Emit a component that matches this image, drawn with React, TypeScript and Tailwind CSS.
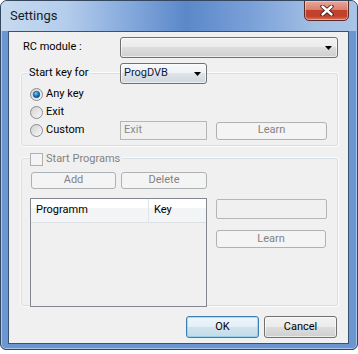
import React from "react";

const font = { fontFamily: 'Roboto, "Noto Sans", sans-serif' };

function Radio({ checked }: { checked?: boolean }) {
  return (
    <svg width="13" height="13" viewBox="0 0 13 13" className="shrink-0">
      <defs>
        <linearGradient id={checked ? "rg1" : "rg0"} x1="0" y1="0" x2="1" y2="1">
          <stop offset="0" stopColor="#d0d0d0" />
          <stop offset="1" stopColor="#fbfbfb" />
        </linearGradient>
        <radialGradient id="dot" cx="0.4" cy="0.35" r="0.7">
          <stop offset="0" stopColor="#8fd0f5" />
          <stop offset="0.5" stopColor="#1a7cc4" />
          <stop offset="1" stopColor="#0b4a82" />
        </radialGradient>
      </defs>
      <circle cx="6.5" cy="6.5" r="6" fill={`url(#${checked ? "rg1" : "rg0"})`} stroke="#8b8d8f" strokeWidth="1" />
      {checked && <circle cx="6.5" cy="6.5" r="3.3" fill="url(#dot)" stroke="#1f4f7a" strokeWidth="0.6" />}
    </svg>
  );
}

function Arrow() {
  return (
    <svg width="7" height="4" viewBox="0 0 7 4" className="shrink-0">
      <path d="M0 0 H7 L3.5 4 Z" fill="#000" />
    </svg>
  );
}

function DisabledButton({ label, className }: { label: string; className: string }) {
  return (
    <div
      className={`flex items-center justify-center rounded-[3px] border border-[#adb2b5] bg-[#f4f4f4] text-[11px] text-[#838383] ${className}`}
    >
      {label}
    </div>
  );
}

export default function App() {
  return (
    <div className="w-[358px] h-[354px] bg-white" style={font}>
      <div className="relative w-[358px] h-[350px] rounded-t-[7px] rounded-b-[6px] border border-[#34475e] bg-[#6a96d2] flex flex-col overflow-hidden shadow-[inset_0_0_0_1px_rgba(255,255,255,0.45)]">
        {/* title bar */}
        <div className="h-[30px] flex items-start justify-between bg-[linear-gradient(90deg,#c6daef_0%,#b5cdec_18%,#7fa5da_38%,#5b88c9_52%,#7aa0d8_70%,#a2bfe4_88%,#a9c4e6_100%)]">
          <span className="pl-[9px] pt-[7px] text-[13px] leading-[16px] text-[#141c28]">Settings</span>
          <div className="mr-[8px] mt-[-1px] w-[45px] h-[21px] rounded-b-[5px] border border-[#5a2a24] bg-[linear-gradient(180deg,#e9a99a_0%,#d98070_45%,#c4402c_50%,#c0412d_80%,#d8745c_100%)] flex items-center justify-center shadow-[inset_0_0_0_1px_rgba(255,220,210,0.5)]">
            <svg width="14" height="11" viewBox="0 0 14 11">
              <path d="M2.5 1.5 L11.5 9.5 M11.5 1.5 L2.5 9.5" stroke="#3a1a16" strokeWidth="4.2" strokeLinecap="round" />
              <path d="M2.5 1.5 L11.5 9.5 M11.5 1.5 L2.5 9.5" stroke="#ffffff" strokeWidth="2.4" strokeLinecap="round" />
            </svg>
          </div>
        </div>

        {/* client area */}
        <div className="ml-[7px] mr-[8px] mb-[5px] h-[313px] border border-[#3a5272] bg-[#f0f0f0] flex flex-col pl-[12px] pr-[10px] pt-[5px] text-[11px] text-black">
          {/* RC module row */}
          <div className="flex items-center h-[21px]">
            <div className="w-[99px] pl-[2px]">RC module :</div>
            <div className="w-[218px] h-[21px] rounded-[3px] border border-[#707070] bg-[linear-gradient(180deg,#f2f2f2_0%,#ebebeb_50%,#dddddd_50%,#cfcfcf_100%)] flex items-center justify-end pr-[5px] shadow-[inset_0_0_0_1px_rgba(255,255,255,0.6)]">
              <Arrow />
            </div>
          </div>

          {/* Group 1 */}
          <div className="mt-[15px] h-[73px] rounded-[3px] border border-[#d5dfe5] flex flex-col shadow-[0_0_0_1px_rgba(255,255,255,0.7)]">
            <div className="mt-[-11px] flex items-center h-[21px]">
              <div className="w-[98px]">
                <span className="ml-[5px] px-[2px] bg-[#f0f0f0]">Start key for</span>
              </div>
              <div className="w-[87px] h-[21px] rounded-[3px] border border-[#707070] bg-[linear-gradient(180deg,#f7f9fa_0%,#eef2f4_50%,#dde4e9_50%,#cfd8de_100%)] flex items-center justify-between pl-[3px] pr-[5px] text-[#101840] shadow-[inset_0_0_0_1px_rgba(255,255,255,0.6)]">
                <span>ProgDVB</span>
                <Arrow />
              </div>
            </div>
            <div className="mt-[1px] h-[18px] flex items-center pl-[8px] gap-[3px]">
              <Radio checked />
              <span>Any key</span>
            </div>
            <div className="h-[18px] flex items-center pl-[8px] gap-[3px]">
              <Radio />
              <span>Exit</span>
            </div>
            <div className="h-[19px] flex items-center">
              <div className="w-[98px] flex items-center pl-[8px] gap-[3px]">
                <Radio />
                <span>Custom</span>
              </div>
              <div className="w-[87px] h-[19px] border border-[#b3b7ba] bg-[#f0f0f0] flex items-center pl-[3px] text-[#8a8a8a]">
                Exit
              </div>
              <DisabledButton label="Learn" className="ml-[9px] w-[111px] h-[18px]" />
            </div>
          </div>

          {/* Group 2 */}
          <div className="mt-[12px] h-[148px] rounded-[3px] border border-[#d5dfe5] flex flex-col shadow-[0_0_0_1px_rgba(255,255,255,0.7)]">
            <div className="mt-[-8px] h-[16px] flex items-center pl-[8px]">
              <div className="flex items-center gap-[3px] bg-[#f0f0f0] pr-[2px]">
                <div className="w-[13px] h-[13px] border border-[#b1b1b1] bg-[#f4f4f4]" />
                <span className="text-[#838383]">Start Programs</span>
              </div>
            </div>
            <div className="mt-[5px] flex items-center pl-[9px] gap-[5px]">
              <DisabledButton label="Add" className="w-[85px] h-[17px]" />
              <DisabledButton label="Delete" className="w-[86px] h-[17px]" />
            </div>
            <div className="mt-[9px] flex items-start pl-[8px] mb-[-2px]">
              <div className="w-[177px] h-[109px] border border-[#828790] bg-[#f0f0f0] flex flex-col">
                <div className="h-[24px] flex bg-[linear-gradient(180deg,#ffffff_0%,#ffffff_40%,#f3f4f6_41%,#f4f5f7_100%)] border-b border-[#dde0e4]">
                  <div className="w-[118px] border-r border-[#e1e5ea] flex items-center pl-[5px]">Programm</div>
                  <div className="flex-1 flex items-center pl-[5px]">Key</div>
                </div>
              </div>
              <div className="ml-[9px] flex flex-col">
                <div className="mt-[1px] w-[111px] h-[20px] rounded-[2px] border border-[#b3b7ba] bg-[#f0f0f0]" />
                <DisabledButton label="Learn" className="mt-[11px] w-[110px] h-[18px]" />
              </div>
            </div>
          </div>

          {/* bottom buttons */}
          <div className="mt-[10px] flex justify-end gap-[5px] pr-[1px]">
            <div className="w-[73px] h-[22px] rounded-[3px] border border-[#3c7fb1] bg-[linear-gradient(180deg,#eef6fb_0%,#e2eef6_50%,#d0e3ef_50%,#c5dbe9_100%)] flex items-center justify-center shadow-[inset_0_0_0_1px_rgba(120,200,240,0.6)]">
              OK
            </div>
            <div className="w-[73px] h-[22px] rounded-[3px] border border-[#707070] bg-[linear-gradient(180deg,#f2f2f2_0%,#ebebeb_50%,#dddddd_50%,#cfcfcf_100%)] flex items-center justify-center shadow-[inset_0_0_0_1px_rgba(255,255,255,0.6)]">
              Cancel
            </div>
          </div>
        </div>
      </div>
    </div>
  );
}
